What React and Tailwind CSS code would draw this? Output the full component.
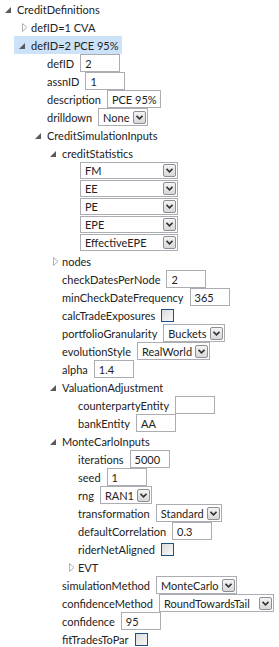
import React from "react";

const FONT = { fontFamily: 'Lato, "Open Sans", sans-serif' };

function Expanded() {
  return (
    <svg width="6" height="6" viewBox="0 0 6 6" className="block">
      <path d="M6 0 L6 6 L0 6 Z" fill="#595959" />
    </svg>
  );
}

function Collapsed() {
  return (
    <svg width="6" height="9" viewBox="0 0 6 9" className="block">
      <path d="M0.5 0.5 L5 4.5 L0.5 8.5 Z" fill="none" stroke="#b0b0b0" strokeWidth="1" />
    </svg>
  );
}

const Node = ({ x, open, selected, children }) => (
  <div className="h-[18px] flex items-center" style={{ paddingLeft: x - 12 }}>
    <div
      className={
        "h-[18px] flex items-center pr-[4px] " +
        (selected ? "bg-[#cce2f8] -ml-[5px] pl-[5px]" : "")
      }
    >
      <span className="w-[12px] flex items-center">
        {open ? (
          <span className="mt-[1px]">
            <Expanded />
          </span>
        ) : (
          <span className="ml-[3px]">
            <Collapsed />
          </span>
        )}
      </span>
      <span>{children}</span>
    </div>
  </div>
);

const Field = ({ x, label, children }) => (
  <div className="h-[18px] flex items-center gap-[6px]" style={{ paddingLeft: x }}>
    <span>{label}</span>
    {children}
  </div>
);

const TextBox = ({ value, w = 40 }) => (
  <div
    className="h-[18px] border border-[#abadb3] bg-white flex items-center px-[4px]"
    style={{ width: w }}
  >
    {value}
  </div>
);

function Arrow() {
  return (
    <span className="w-[13px] h-[13px] rounded-[2px] border border-[#8c8f94] bg-gradient-to-b from-[#f4f4f4] to-[#d8d8d8] flex items-center justify-center">
      <svg width="7" height="5" viewBox="0 0 7 5">
        <path d="M0.5 0.8 L3.5 3.8 L6.5 0.8" fill="none" stroke="#333" strokeWidth="1.6" />
      </svg>
    </span>
  );
}

const Select = ({ value, w }) => (
  <div
    className="h-[18px] border border-[#abadb3] bg-white flex items-center justify-between pl-[4px] pr-[1px]"
    style={w ? { width: w } : undefined}
  >
    <span className="pr-[3px]">{value}</span>
    <Arrow />
  </div>
);

const Check = () => (
  <span className="w-[13px] h-[13px] border border-[#1c4f82] bg-gradient-to-br from-[#dcdcdc] to-[#f8f8f8]" />
);

const Stat = ({ value }) => (
  <div className="h-[18px] flex items-start" style={{ paddingLeft: 80 }}>
    <div className="w-[98px] h-[17px] border border-[#abadb3] bg-white flex items-center justify-between pl-[4px] pr-[1px]">
      <span>{value}</span>
      <Arrow />
    </div>
  </div>
);

export default function App() {
  return (
    <div className="w-[279px] h-[647px] bg-white text-[11px] text-[#222] leading-none whitespace-nowrap overflow-hidden" style={FONT}>
      <Node x={17} open>CreditDefinitions</Node>
      <Node x={31}>defID=1 CVA</Node>
      <Node x={31} open selected>defID=2 PCE 95%</Node>
      <Field x={47} label="defID"><TextBox value="2" /></Field>
      <Field x={47} label="assnID"><TextBox value="1" /></Field>
      <Field x={47} label="description"><TextBox value="PCE 95%" w={54} /></Field>
      <Field x={47} label="drilldown"><Select value="None" /></Field>
      <Node x={47} open>CreditSimulationInputs</Node>
      <Node x={62} open>creditStatistics</Node>
      <Stat value="FM" />
      <Stat value="EE" />
      <Stat value="PE" />
      <Stat value="EPE" />
      <Stat value="EffectiveEPE" />
      <Node x={62}>nodes</Node>
      <Field x={62} label="checkDatesPerNode"><TextBox value="2" /></Field>
      <Field x={62} label="minCheckDateFrequency"><TextBox value="365" /></Field>
      <Field x={62} label="calcTradeExposures"><Check /></Field>
      <Field x={62} label="portfolioGranularity"><Select value="Buckets" /></Field>
      <Field x={62} label="evolutionStyle"><Select value="RealWorld" /></Field>
      <Field x={62} label="alpha"><TextBox value="1.4" /></Field>
      <Node x={62} open>ValuationAdjustment</Node>
      <Field x={78} label="counterpartyEntity"><TextBox value="" /></Field>
      <Field x={78} label="bankEntity"><TextBox value="AA" /></Field>
      <Node x={62} open>MonteCarloInputs</Node>
      <Field x={78} label="iterations"><TextBox value="5000" /></Field>
      <Field x={78} label="seed"><TextBox value="1" /></Field>
      <Field x={78} label="rng"><Select value="RAN1" /></Field>
      <Field x={78} label="transformation"><Select value="Standard" /></Field>
      <Field x={78} label="defaultCorrelation"><TextBox value="0.3" /></Field>
      <Field x={78} label="riderNetAligned"><Check /></Field>
      <Node x={78}>EVT</Node>
      <Field x={62} label="simulationMethod"><Select value="MonteCarlo" /></Field>
      <Field x={62} label="confidenceMethod"><Select value="RoundTowardsTail" w={115} /></Field>
      <Field x={62} label="confidence"><TextBox value="95" /></Field>
      <Field x={62} label="fitTradesToPar"><Check /></Field>
    </div>
  );
}
